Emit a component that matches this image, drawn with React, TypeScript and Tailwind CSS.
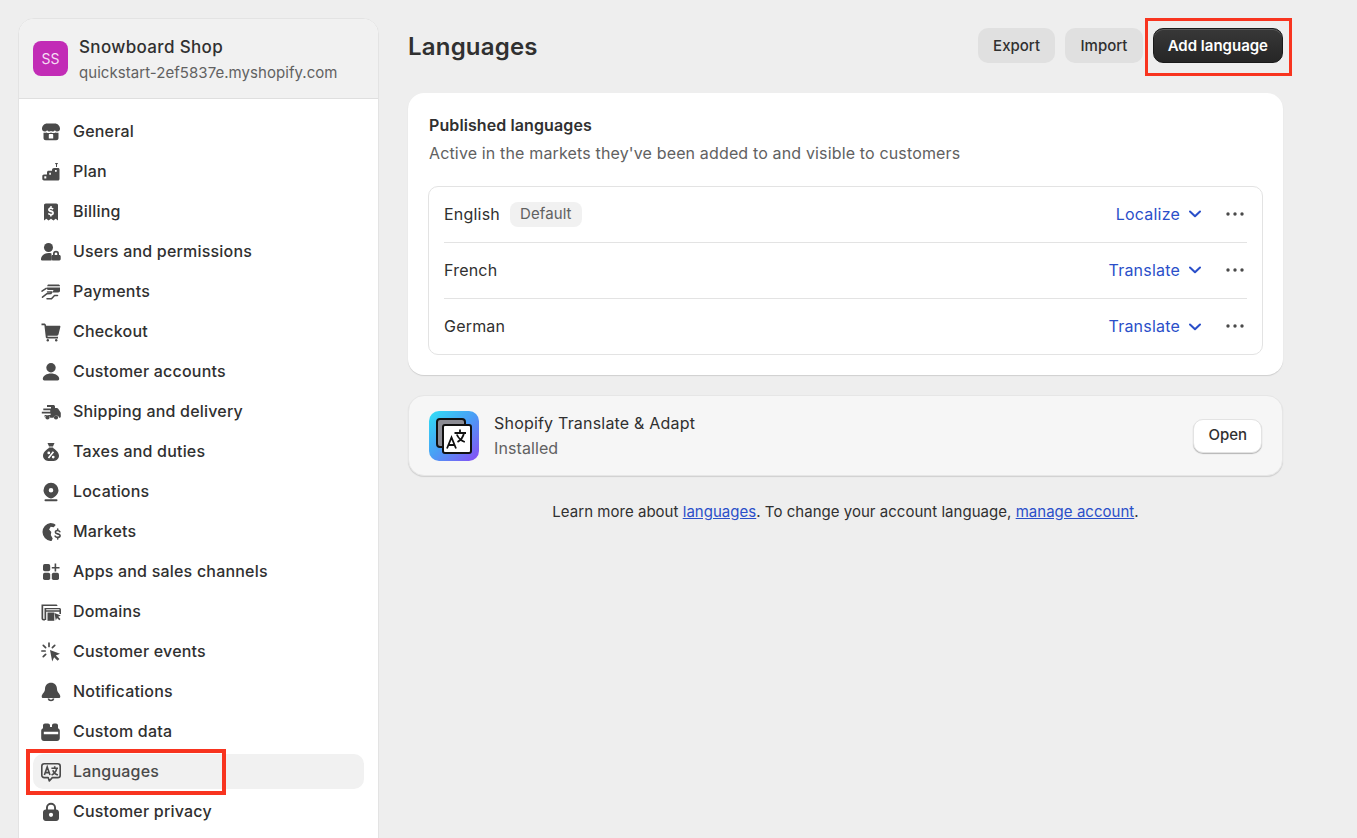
import type { ReactNode } from "react";

const F = "#4a4a4a";

const icons: Record<string, ReactNode> = {
  store: (
    <>
      <path fill={F} d="M6 1.500h8c2.600 0 4.800 2.200 5 5 .1 1.700-1.100 3-2.700 3-1 0-1.900-.5-2.400-1.300-.5.800-1.500 1.300-2.500 1.300-.6 0-1-.2-1.400-.4-.4.200-.9.400-1.400.4-1 0-2-.5-2.500-1.300-.5.800-1.400 1.300-2.400 1.300C2.100 9.500.9 8.200 1 6.500c.2-2.800 2.400-5 5-5z" />
      <path fill={F} fillRule="evenodd" d="M2.500 10.700c1 .3 2.100.2 3-.3 1.300.7 3 .7 4.500 0 1.500.7 3.200.7 4.500 0 .9.500 2 .6 3 .3V16c0 1.300-1 2.300-2.300 2.300H4.800c-1.300 0-2.300-1-2.300-2.300zM7.800 13c0-.6.500-1 1-1h2.400c.5 0 1 .4 1 1v3.500H7.800z" />
    </>
  ),
  plan: (
    <>
      <path fill={F} d="M13.800 1h3.400l-1.200 1.500v2.500h-1V2.500z" />
      <path fill={F} fillRule="evenodd" d="M13 6h4.200c.7 0 1.300.6 1.300 1.300V17c0 .8-.6 1.500-1.500 1.500H3c-1 0-1.700-.7-1.700-1.700v-2.600c0-.9.700-1.700 1.700-1.700h3V10.300C6 9.500 6.700 8.800 7.500 8.800H11V8c0-1.100.9-2 2-2zM3.300 14.300v2.200h2v-2.200zM8.300 10.800v2h1.600v-2zM14 8v1.800h1.700V8z" />
    </>
  ),
  billing: (
    <path fill={F} fillRule="evenodd" d="M4.800 1.500h10.400c1.100 0 1.800.8 1.800 1.800v15.200l-2.300-1.700-2.300 1.700-2.400-1.700-2.400 1.700-2.300-1.700L3 18.500V3.300c0-1 .7-1.800 1.800-1.800zm6 2.500H9.300v1.200c-1.300.3-2.200 1.200-2.200 2.500 0 1.400 1.100 2.100 2.800 2.500 1 .2 1.400.4 1.400.8s-.5.700-1.300.7c-.8 0-1.600-.3-2.100-.9l-1.100 1.200c.6.600 1.400 1 2.300 1.200V14.500h1.500v-1.100c1.400-.3 2.300-1.200 2.300-2.500 0-1.500-1.100-2.200-2.800-2.600-1-.2-1.400-.4-1.400-.7 0-.4.400-.6 1.100-.6s1.300.2 1.800.8l1.100-1.200c-.6-.600-1.300-1-2.100-1.200z" />
  ),
  users: (
    <>
      <circle cx="7.500" cy="5.500" r="4.500" fill={F} />
      <path fill={F} d="M7.800 11c1 0 1.900.1 2.700.4v7.100H1c-.8 0-1.300-.6-1.200-1.400C.3 13.500 3.600 11 7.800 11z" />
      <path fill={F} fillRule="evenodd" d="M15 8.800a3 3 0 0 1 3 3v1.200h.3c.8 0 1.400.6 1.400 1.400v2.700c0 .8-.6 1.400-1.400 1.400h-6.600c-.8 0-1.400-.6-1.400-1.400v-2.700c0-.8.600-1.400 1.400-1.400h.3v-1.200a3 3 0 0 1 3-3zm0 1.700c-.7 0-1.300.6-1.300 1.300V13h2.600v-1.200c0-.7-.6-1.300-1.300-1.300z" />
    </>
  ),
  payments: (
    <>
      <path fill={F} d="M7.500 2.500h9.700c1 0 1.800.7 1.800 1.700H6.200C6.300 3.200 6.800 2.500 7.500 2.500z" />
      <path fill={F} d="M6 5.500h13v3.300c0 1-.8 1.700-1.800 1.700H11.500l1-2.500H7.500L6 7.500z" />
      <path fill="none" stroke={F} strokeWidth="1.500" strokeLinecap="round" strokeLinejoin="round" d="M1 9.200 5.200 6.400 M1.500 15.200 6 11.700l3.800-.1 1-1.600H6.500 M6 16.800h4.500l3-3.300h3" />
    </>
  ),
  cart: (
    <>
      <path fill={F} d="M.5 1.500h2.700c.9 0 1.600.6 1.800 1.500l.1.700h13.400c.6 0 1 .5.900 1.100L17.600 12c-.2 1-1 1.800-2.100 1.800H6.500l.1 1h10.400v1.600H6c-.6 0-1.100-.5-1.200-1.100L3.400 3.200H.5z" />
      <circle cx="6.800" cy="18.300" r="1.200" fill={F} />
      <circle cx="15.200" cy="18.300" r="1.200" fill={F} />
    </>
  ),
  person: (
    <>
      <circle cx="10" cy="5.700" r="4.700" fill={F} />
      <path fill={F} d="M10 11.500c4.500 0 7.800 2.200 8.200 5 .1 1-.6 2-1.600 2H3.400c-1 0-1.700-1-1.600-2 .4-2.800 3.700-5 8.200-5z" />
    </>
  ),
  truck: (
    <>
      <path fill={F} d="M6 3h6.300c1 0 1.700.7 1.700 1.700v1.200h1.800c.6 0 1.100.3 1.400.8l2.300 3.500c.2.300.3.600.3.900v3.300c0 .8-.6 1.400-1.400 1.400h-.2a3 3 0 0 0-5.800 0H9.300a3 3 0 0 0-5.700-.4v-2.400h6v-1.600H.8V9.800h8.400V8.200H2.300V6.500h7.700V5H6z" />
      <circle cx="6.500" cy="15.500" r="2.100" fill={F} />
      <circle cx="15" cy="15.500" r="2.100" fill={F} />
    </>
  ),
  taxes: (
    <>
      <path fill={F} d="M6.500 1h7l-1.500 3.500H8z" />
      <path fill={F} fillRule="evenodd" d="M8 5.500h4c.5 1.700 6 3.500 6 8.300 0 2.700-2.300 5.200-5.200 5.200H7.200C4.300 19 2 16.500 2 13.800 2 9 7.500 7.200 8 5.500zm3.800 3.800-5 6.200 1.300 1 5-6.200zM7.800 9.500a1.400 1.400 0 1 0 0 2.800 1.400 1.400 0 0 0 0-2.800zm4.400 4.200a1.400 1.400 0 1 0 0 2.800 1.400 1.400 0 0 0 0-2.800z" />
    </>
  ),
  location: (
    <>
      <path fill={F} fillRule="evenodd" d="M10 .8a7.500 7.500 0 0 1 7.500 7.500c0 3.600-3.200 6.600-5.800 7.700-1.100.5-2.300.5-3.400 0C5.700 14.900 2.500 11.900 2.500 8.300A7.500 7.500 0 0 1 10 .8zm0 5.200a2.300 2.300 0 1 0 0 4.600 2.300 2.300 0 0 0 0-4.600z" />
      <rect x="3.500" y="17.300" width="13" height="1.900" rx=".9" fill={F} />
    </>
  ),
  markets: (
    <>
      <path fill={F} d="M9.500 1c2 0 3.800.7 5.200 1.900l-2 2.300-3-.5-1.600 2.700 2.200 2.500-.5 3.200 1.900 3.500-1.100 2.300h-1A9 9 0 0 1 9.500 1z" />
      <path fill="none" stroke={F} strokeWidth="1.600" strokeLinecap="round" d="M18.800 9.700c-.4-.7-1.100-1.200-2.200-1.200-1.200 0-2.200.7-2.200 1.700 0 2.200 4.700 1.100 4.700 3.400 0 1.100-1.100 1.800-2.400 1.800-1.100 0-2.100-.5-2.600-1.300 M16.700 7v1.400 M16.700 15.500V17" />
    </>
  ),
  apps: (
    <>
      <rect x="2" y="2" width="7.200" height="7.200" rx="1.700" fill={F} />
      <rect x="2" y="10.800" width="7.200" height="7.200" rx="1.700" fill={F} />
      <rect x="10.800" y="10.800" width="7.200" height="7.200" rx="1.700" fill={F} />
      <path fill={F} d="M13.600 1.500h1.600V5h3.300v1.600h-3.300V9.500h-1.600V6.600h-2.800V5h2.800z" />
    </>
  ),
  domains: (
    <>
      <path fill={F} fillRule="evenodd" d="M.5 2.500h14.500c.8 0 1.500.6 1.500 1.400H2.200v12.300c0 .4.300.7.700.7H4v1.600H2.500c-1.100 0-2-.9-2-2z" />
      <path fill={F} fillRule="evenodd" d="M3.500 6h15c.8 0 1.500.7 1.500 1.500V12h-1.600v-2.300H5.200V18H3.500zM5.200 7.200v1h13.200v-1z" />
      <path fill={F} d="M6.500 10.500h6.800v8.300H6.500z" />
      <path fill={F} d="M13.500 11l6.300 2.500-2.600 1.200 2.300 2.300-1.200 1.200-2.300-2.300-1.200 2.700z" />
    </>
  ),
  events: (
    <>
      <path fill={F} d="M9 8l10 3.700-4.200 1.900 3.500 3.500-1.700 1.700-3.500-3.500-1.900 4.200z" />
      <path fill="none" stroke={F} strokeWidth="1.700" strokeLinecap="round" d="M8 1.200v3.300 M2.300 3.300l2.300 2.300 M13.700 3.300l-2.300 2.300 M.8 9h3.300 M2.300 14.700l2.300-2.300" />
    </>
  ),
  bell: (
    <>
      <path fill={F} d="M10 .8c3.600 0 6 2.700 6 6.200 0 3.300 3.300 4.900 3.300 7.500 0 1-.7 1.500-1.500 1.500H2.200c-.8 0-1.500-.5-1.500-1.500 0-2.600 3.300-4.200 3.300-7.500C4 3.500 6.400.8 10 .8z" />
      <path fill="none" stroke={F} strokeWidth="1.600" d="M7.300 16.500a2.800 2.800 0 0 0 5.400 0" />
    </>
  ),
  data: (
    <path fill={F} fillRule="evenodd" d="M5 1.500h2c1.100 0 2 .9 2 2V5h2V3.500c0-1.100.9-2 2-2h2c1.100 0 2 .9 2 2v2.800c1.100.4 1.800 1.400 1.800 2.600v7.300c0 1.500-1.200 2.800-2.800 2.800H3c-1.600 0-2.800-1.300-2.800-2.800V8.900c0-1.200.7-2.200 1.800-2.600V3.500c0-1.100.9-2 2-2zM2.800 9.800v2.400h14.400V9.800z" />
  ),
  lang: (
    <>
      <path fill="none" stroke={F} strokeWidth="1.600" strokeLinejoin="round" d="M3.200 1.800h13.600c1.400 0 2.400 1 2.400 2.400v9c0 1.300-1 2.400-2.400 2.400h-5.500l-3 3.400-1.100-3.400h-4c-1.400 0-2.400-1.100-2.400-2.400v-9c0-1.400 1-2.400 2.400-2.400z" />
      <path fill="none" stroke={F} strokeWidth="1.600" d="M3.400 13 6.200 5l2.800 8 M4.400 10.600h3.600 M10.400 6.300h6.600 M13.700 4.300v2 M15.700 6.300c-.5 3-2.400 5.400-5.100 6.700 M11.800 8.200c.7 2.200 2.500 3.900 5.100 4.800" />
    </>
  ),
  lock: (
    <path fill={F} fillRule="evenodd" d="M10 .8a5 5 0 0 1 5 5V7.500h.2c1.500 0 2.800 1.300 2.800 2.800v6c0 1.500-1.300 2.800-2.800 2.800H4.800C3.300 19.100 2 17.800 2 16.300v-6c0-1.500 1.300-2.800 2.800-2.800H5V5.800a5 5 0 0 1 5-5zm0 1.900a3.100 3.100 0 0 0-3.100 3.100v1.700h6.200V5.800A3.100 3.100 0 0 0 10 2.700zm0 8a2.100 2.100 0 1 0 0 4.200 2.100 2.100 0 0 0 0-4.200z" />
  ),
};

const navItems = [
  { label: "General", icon: "store" },
  { label: "Plan", icon: "plan" },
  { label: "Billing", icon: "billing" },
  { label: "Users and permissions", icon: "users" },
  { label: "Payments", icon: "payments" },
  { label: "Checkout", icon: "cart" },
  { label: "Customer accounts", icon: "person" },
  { label: "Shipping and delivery", icon: "truck" },
  { label: "Taxes and duties", icon: "taxes" },
  { label: "Locations", icon: "location" },
  { label: "Markets", icon: "markets" },
  { label: "Apps and sales channels", icon: "apps" },
  { label: "Domains", icon: "domains" },
  { label: "Customer events", icon: "events" },
  { label: "Notifications", icon: "bell" },
  { label: "Custom data", icon: "data" },
  { label: "Languages", icon: "lang", active: true },
  { label: "Customer privacy", icon: "lock" },
];

const languages = [
  { name: "English", action: "Localize", isDefault: true },
  { name: "French", action: "Translate" },
  { name: "German", action: "Translate" },
];

const NavRow = ({ item }: { item: (typeof navItems)[number] }) => (
  <div
    className={`flex h-[35px] items-center gap-[12px] rounded-[10px] px-[8px] ${
      item.active ? "bg-[#f1f1f1] text-[#4a4a4a]" : "text-[#303030]"
    }`}
  >
    <svg viewBox="0 0 20 20" className="size-[20px] shrink-0">
      {icons[item.icon]}
    </svg>
    <span className="pb-[2px] text-[16px] leading-[20px] font-[500] tracking-[0.2px]">{item.label}</span>
  </div>
);

const GrayButton = ({ children }: { children: ReactNode }) => (
  <button className="flex h-[35px] items-center rounded-[10px] bg-[#e0e0e0] px-[15.250px] pt-[1px] text-[15px] font-[500] text-[#303030]">
    {children}
  </button>
);

const LanguageRow = ({ lang }: { lang: (typeof languages)[number] }) => (
  <div className="flex h-[56px] items-center justify-between border-b border-[#e3e3e3] pb-[2px] last:h-[55px] last:border-b-0 last:pb-[1px]">
    <div className="flex items-center gap-[10px]">
      <span className="text-[16px] tracking-[0.2px] text-[#303030]">{lang.name}</span>
      {lang.isDefault && (
        <span className="mt-[1px] flex h-[25px] items-center rounded-[8px] bg-[#f1f1f1] px-[10px] text-[15px] tracking-[0.1px] text-[#616161]">
          Default
        </span>
      )}
    </div>
    <div className="flex items-center pr-[3px]">
      <span className="text-[16px] tracking-[0.2px] text-[#2a4fc9]">{lang.action}</span>
      <svg viewBox="0 0 12 8" className="mt-[1px] ml-[9px] h-[8px] w-[12px]">
        <path fill="none" stroke="#2a4fc9" strokeWidth="2" strokeLinecap="round" strokeLinejoin="round" d="M1 1.500 6 6.300l5-4.800" />
      </svg>
      <svg viewBox="0 0 18 4" className="ml-[25px] h-[4px] w-[18px]">
        <circle cx="2" cy="2" r="1.700" fill="#4a4a4a" />
        <circle cx="9" cy="2" r="1.700" fill="#4a4a4a" />
        <circle cx="16" cy="2" r="1.700" fill="#4a4a4a" />
      </svg>
    </div>
  </div>
);

const TranslateLogo = () => (
  <svg viewBox="0 0 50 50" className="size-[50px] shrink-0 rounded-[10px]">
    <defs>
      <linearGradient id="tile" x1="0" y1="0" x2="1" y2="1">
        <stop offset="0" stopColor="#2fe0f5" />
        <stop offset="0.5" stopColor="#4b9cf5" />
        <stop offset="1" stopColor="#8a4bf5" />
      </linearGradient>
    </defs>
    <rect width="50" height="50" fill="url(#tile)" />
    <rect x="8" y="8" width="28" height="28" rx="3" fill="#8c8c94" stroke="#111" strokeWidth="2" />
    <rect x="14" y="14" width="28" height="28" rx="2" fill="#fff" stroke="#111" strokeWidth="2" />
    <path fill="none" stroke="#111" strokeWidth="1.800" d="M18 37.500l4.500-11 4.500 11 M19.500 34h6 M25.500 22h11.500 M31 18.500V22 M35 22c-.8 4-3 7-6.500 9 M27.800 23.500c1.500 3.500 4 6 8 7.500" />
  </svg>
);

export default function App() {
  return (
    <div className="relative h-[838px] overflow-hidden bg-[#eeeeee] font-['Inter',sans-serif]">
      <div className="flex items-start gap-[29px] pl-[18px] pt-[18px]">
        <aside className="w-[361px] shrink-0 overflow-hidden rounded-[16px] border border-[#e3e3e3] bg-white">
          <div className="flex h-[80px] items-center gap-[11px] border-b border-[#dfdfdf] bg-[#f1f1f1] px-[14px]">
            <div className="flex size-[35px] items-center justify-center rounded-[8px] bg-[#c22cb6] text-[14px] text-[#f6dcf3]">
              SS
            </div>
            <div className="pt-[2px]">
              <div className="text-[17px] leading-[25px] font-[500] tracking-[0.35px] text-[#303030]">Snowboard Shop</div>
              <div className="text-[15px] leading-[25px] tracking-[0.05px] text-[#616161]">quickstart-2ef5837e.myshopify.com</div>
            </div>
          </div>
          <nav className="flex flex-col gap-[5px] px-[14px] pt-[15px] pb-[40px]">
            {navItems.map((item) => (
              <NavRow key={item.label} item={item} />
            ))}
          </nav>
        </aside>

        <main className="w-[875px] shrink-0">
          <div className="flex h-[58px] items-start justify-between">
            <h1 className="pt-[11px] text-[24px] leading-[36px] font-[600] tracking-[0.2px] text-[#303030]">Languages</h1>
            <div className="flex gap-[10px] pt-[10px]">
              <GrayButton>Export</GrayButton>
              <GrayButton>Import</GrayButton>
              <button className="flex h-[35px] items-center rounded-[10px] border border-[#1a1a1a] bg-gradient-to-b from-[#383838] to-[#262626] px-[14px] pt-[1px] text-[15px] font-[600] text-white shadow-[inset_0_1px_0_#5a5a5a]">
                Add language
              </button>
            </div>
          </div>

          <section className="mt-[17px] rounded-[16px] bg-white px-[20px] pt-[20px] pb-[20px] shadow-[0_1px_1px_#cfcfcf]">
            <h2 className="pl-[1px] text-[16px] leading-[24px] font-[600] tracking-[0.1px] text-[#303030]">Published languages</h2>
            <p className="mt-[4px] pl-[1px] text-[16px] leading-[24px] tracking-[0.15px] text-[#616161]">
              Active in the markets they've been added to and visible to customers
            </p>
            <div className="mt-[21px] rounded-[10px] border border-[#e3e3e3] px-[15px]">
              {languages.map((lang) => (
                <LanguageRow key={lang.name} lang={lang} />
              ))}
            </div>
          </section>

          <section className="mt-[20px] flex h-[81px] items-center justify-between rounded-[16px] border border-[#e6e6e6] bg-[#f6f6f6] pr-[20px] pl-[20px] shadow-[0_1px_1px_#cfcfcf]">
            <div className="flex items-center gap-[15px]">
              <TranslateLogo />
              <div>
                <div className="text-[16px] leading-[25px] tracking-[0.2px] text-[#303030]">Shopify Translate &amp; Adapt</div>
                <div className="text-[16px] leading-[25px] tracking-[0.1px] text-[#616161]">Installed</div>
              </div>
            </div>
            <button className="flex h-[34px] items-center rounded-[10px] border border-[#e3e3e3] bg-white px-[14px] text-[15px] font-[500] text-[#303030] shadow-[0_1px_1px_#b5b5b5]">
              Open
            </button>
          </section>

          <p className="mt-[25px] text-center text-[15px] leading-[22px] tracking-[0.03px] text-[#303030]">
            Learn more about <span className="text-[#2a4fc9] underline">languages</span>. To change your account language,{" "}
            <span className="text-[#2a4fc9] underline">manage account</span>.
          </p>
        </main>
      </div>

      {/* red callouts drawn on top of the screenshot */}
      <div className="absolute top-[18px] left-[1145px] h-[58px] w-[147px] border-[3px] border-[#f8341f]" />
      <div className="absolute top-[749px] left-[26px] h-[46px] w-[200px] border-[4px] border-[#f8341f]" />
    </div>
  );
}
